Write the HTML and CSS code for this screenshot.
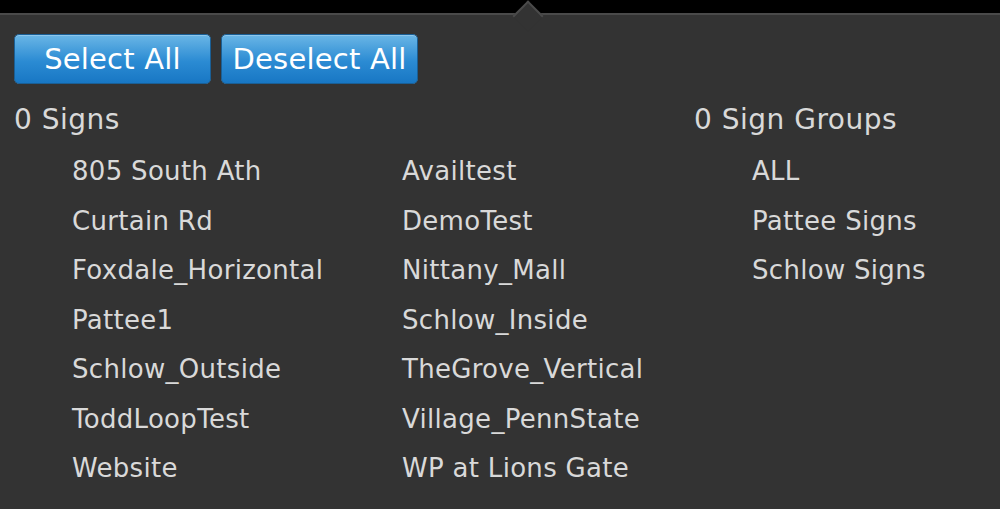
FILE: index.html
```html
<!DOCTYPE html>
<html lang="en">
<head>
    <meta charset="UTF-8">
    <meta name="viewport" content="width=device-width, initial-scale=1.0">
    <title>Sign Picker</title>
    <link rel="stylesheet" href="styles.css">
</head>
<body>
    <div class="topbar"></div>

    <div class="panel">
        <div class="actions">
            <button class="btn" id="select-all">Select All</button>
            <button class="btn" id="deselect-all">Deselect All</button>
        </div>

        <div class="lists">
            <div class="signs">
                <div class="heading">0 Signs</div>
                <div class="sign-grid">
                    <div class="item">805 South Ath</div>
                    <div class="item">Availtest</div>
                    <div class="item">Curtain Rd</div>
                    <div class="item">DemoTest</div>
                    <div class="item">Foxdale_Horizontal</div>
                    <div class="item">Nittany_Mall</div>
                    <div class="item">Pattee1</div>
                    <div class="item">Schlow_Inside</div>
                    <div class="item">Schlow_Outside</div>
                    <div class="item">TheGrove_Vertical</div>
                    <div class="item">ToddLoopTest</div>
                    <div class="item">Village_PennState</div>
                    <div class="item">Website</div>
                    <div class="item">WP at Lions Gate</div>
                </div>
            </div>

            <div class="groups">
                <div class="heading">0 Sign Groups</div>
                <div class="group-list">
                    <div class="item">ALL</div>
                    <div class="item">Pattee Signs</div>
                    <div class="item">Schlow Signs</div>
                </div>
            </div>
        </div>
    </div>
</body>
</html>
```

FILE: styles.css
```css
body {
    margin: 0;
    background-color: #333333;
    color: #d9d9d9;
    font-family: Tahoma, "DejaVu Sans", Verdana, sans-serif;
    overflow: hidden;
}

.topbar {
    position: relative;
    height: 13px;
    background-color: #000;
    border-bottom: 2px solid #4a4a4a;
}

/* little pointer at the top of the popup */
.topbar::after {
    content: "";
    position: absolute;
    left: 517px;
    top: 5px;
    width: 20px;
    height: 20px;
    background-color: #333333;
    border-top: 2px solid #4a4a4a;
    border-left: 2px solid #4a4a4a;
    transform: rotate(45deg);
}

.panel {
    padding: 19px 0 0 14px;
}

.actions {
    display: flex;
    gap: 10px;
}

.btn {
    width: 197px;
    height: 50px;
    padding: 0;
    font-family: inherit;
    font-size: 29px;
    letter-spacing: 0.2px;
    color: #fff;
    background-image: linear-gradient(#6ab6e6, #2b8bd3 55%, #1877c4);
    border: 1px solid #1a5f95;
    border-radius: 5px;
    box-shadow: inset 0 1px 0 rgba(255, 255, 255, 0.25);
}

.lists {
    display: flex;
    margin-top: 16px;
}

.heading {
    font-size: 28px;
    letter-spacing: 0.5px;
    line-height: 40px;
}

.item {
    font-size: 26px;
    letter-spacing: 0.3px;
    line-height: 49.5px;
    white-space: nowrap;
}

.signs {
    width: 680px;
}

.sign-grid {
    display: grid;
    grid-template-columns: 330px auto;
    padding-left: 58px;
    margin-top: 7px;
}

.group-list {
    padding-left: 58px;
    margin-top: 7px;
}
```
